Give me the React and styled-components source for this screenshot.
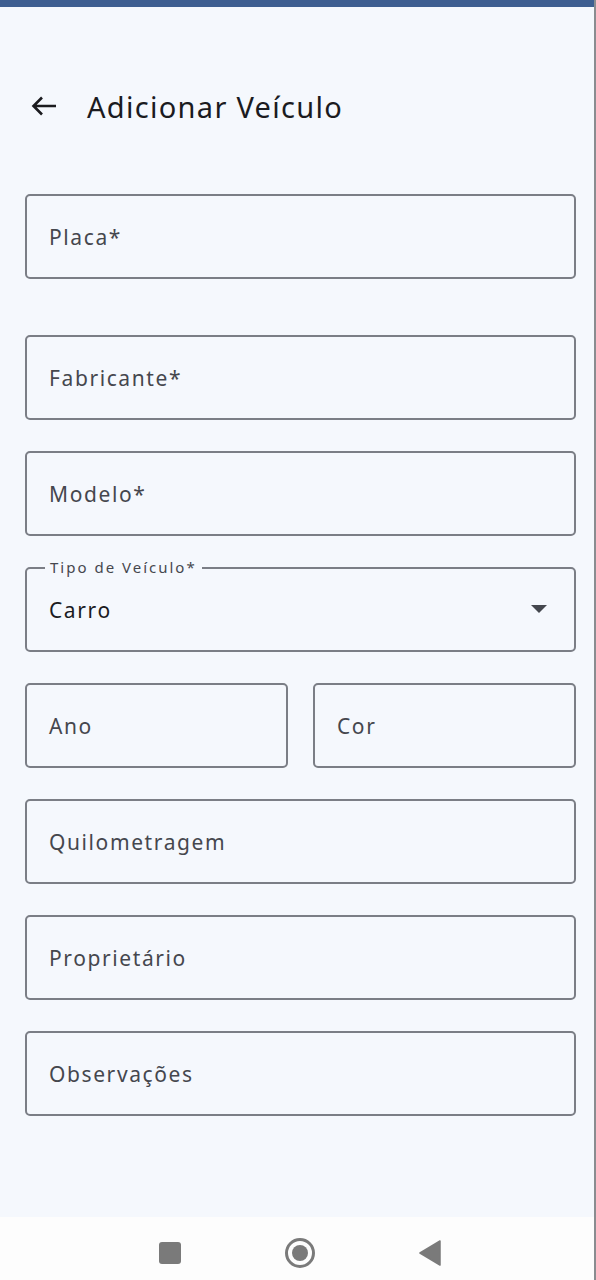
import React from "react";
import styled, { createGlobalStyle } from "styled-components";

const GlobalStyle = createGlobalStyle`
  html, body {
    margin: 0;
    padding: 0;
    background: #f5f8fd;
  }
  * {
    box-sizing: border-box;
  }
`;

const FIELD_GAP = 31;

const fields = [
  { label: "Placa*", gapAfter: 56 },
  { label: "Fabricante*" },
  { label: "Modelo*" },
];

const bottomFields = ["Quilometragem", "Proprietário", "Observações"];

const App = () => {
  return (
    <Screen>
      <GlobalStyle />
      <StatusBar />
      <Content>
        <Header>
          <BackButton aria-label="Voltar">
            <svg width="26" height="20" viewBox="0 0 26 20" fill="none">
              <path
                d="M25 10H2.5M11 1.5L2.5 10L11 18.5"
                stroke="#1b1b1f"
                strokeWidth="2.6"
              />
            </svg>
          </BackButton>
          <Title>Adicionar Veículo</Title>
        </Header>

        <Form>
          {fields.map((f) => (
            <Field key={f.label} $gapAfter={f.gapAfter}>
              <Placeholder>{f.label}</Placeholder>
            </Field>
          ))}

          <Field>
            <FloatingLabel>Tipo de Veículo*</FloatingLabel>
            <Value>Carro</Value>
            <Caret />
          </Field>

          <Row>
            <Field>
              <Placeholder>Ano</Placeholder>
            </Field>
            <Field>
              <Placeholder>Cor</Placeholder>
            </Field>
          </Row>

          {bottomFields.map((label) => (
            <Field key={label}>
              <Placeholder>{label}</Placeholder>
            </Field>
          ))}
        </Form>
      </Content>

      <NavBar>
        <NavSquare />
        <NavHome>
          <NavDot />
        </NavHome>
        <svg width="22" height="26" viewBox="0 0 22 26">
          <path
            d="M21 1L1 13L21 25Z"
            fill="#7a7a7a"
            strokeLinejoin="round"
            stroke="#7a7a7a"
            strokeWidth="1.5"
          />
        </svg>
      </NavBar>
    </Screen>
  );
};

export default App;

const Screen = styled.div`
  width: 596px;
  height: 1280px;
  display: flex;
  flex-direction: column;
  background: #f5f8fd;
  border-right: 2px solid #8a8c90;
  font-family: "Noto Sans", "DejaVu Sans", sans-serif;
  overflow: hidden;
`;

const StatusBar = styled.div`
  height: 7px;
  background: #3e5e91;
  flex-shrink: 0;
`;

const Content = styled.div`
  flex: 1;
  padding: 72px 18px 0 25px;
`;

const Header = styled.div`
  height: 54px;
  display: flex;
  align-items: center;
  gap: 30px;
  margin-bottom: 61px;
`;

const BackButton = styled.div`
  width: 32px;
  display: flex;
  align-items: center;
  justify-content: flex-end;
`;

const Title = styled.h1`
  margin: 0;
  font-size: 29px;
  font-weight: 400;
  letter-spacing: 1.3px;
  color: #1b1b1f;
`;

const Form = styled.div`
  display: flex;
  flex-direction: column;
  gap: ${FIELD_GAP}px;
`;

const Field = styled.div`
  position: relative;
  height: 85px;
  border: 2px solid #7b7e86;
  border-radius: 5px;
  display: flex;
  align-items: center;
  padding: 0 22px;
  margin-bottom: ${(p) => (p.$gapAfter ? p.$gapAfter - FIELD_GAP : 0)}px;
`;

const Placeholder = styled.span`
  font-size: 21px;
  letter-spacing: 1.6px;
  color: #45474e;
`;

const FloatingLabel = styled.span`
  position: absolute;
  top: -11px;
  left: 18px;
  padding: 0 5px;
  background: #f5f8fd;
  font-size: 15px;
  line-height: 18px;
  letter-spacing: 2px;
  color: #45474e;
`;

const Value = styled.span`
  font-size: 21px;
  letter-spacing: 1.6px;
  color: #1b1b1f;
`;

const Caret = styled.span`
  position: absolute;
  right: 27px;
  top: 36px;
  width: 0;
  height: 0;
  border-left: 8px solid transparent;
  border-right: 8px solid transparent;
  border-top: 8px solid #44474e;
`;

const Row = styled.div`
  display: grid;
  grid-template-columns: 1fr 1fr;
  gap: 25px;
`;

const NavBar = styled.div`
  height: 63px;
  flex-shrink: 0;
  background: #fdfdfd;
  display: flex;
  align-items: center;
  justify-content: center;
  gap: 104px;
  padding: 8px 0 0 5px;
`;

const NavSquare = styled.div`
  width: 22px;
  height: 22px;
  border-radius: 3px;
  background: #7a7a7a;
`;

const NavHome = styled.div`
  width: 30px;
  height: 30px;
  border-radius: 50%;
  border: 3px solid #7a7a7a;
  display: flex;
  align-items: center;
  justify-content: center;
`;

const NavDot = styled.div`
  width: 16px;
  height: 16px;
  border-radius: 50%;
  background: #7a7a7a;
`;
